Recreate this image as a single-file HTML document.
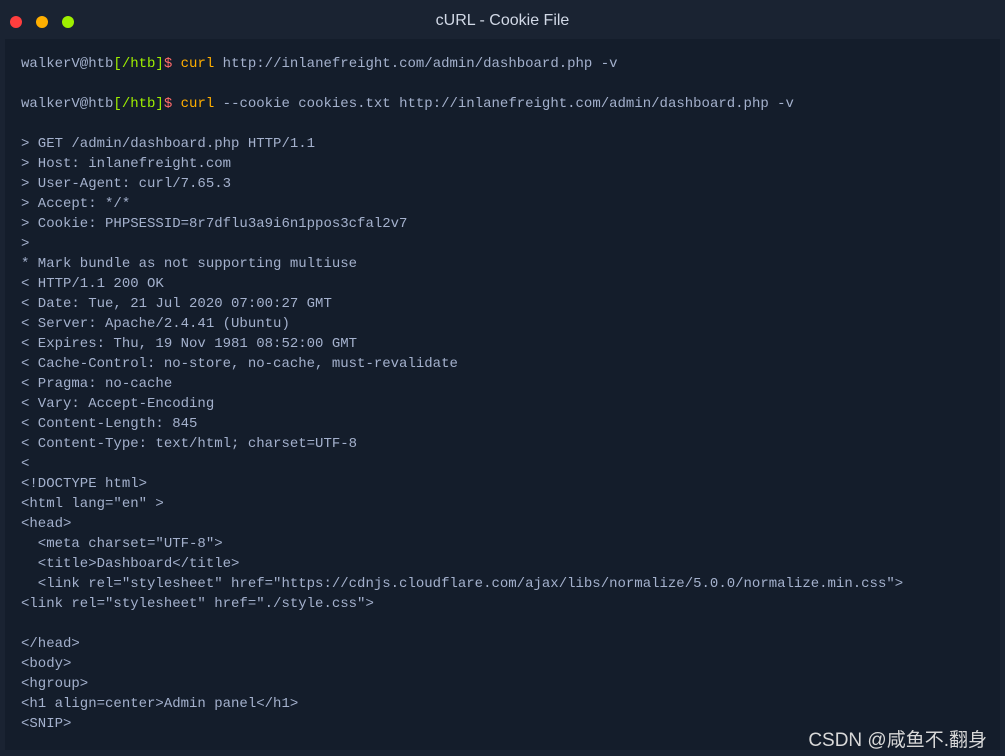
<!DOCTYPE html>
<html><head><meta charset="utf-8"><style>
html,body{margin:0;padding:0;width:1005px;height:756px;background:#1a2332;overflow:hidden}
.bar{position:absolute;left:0;top:0;width:1005px;height:39px;background:#1a2332}
.dot{position:absolute;top:16px;width:12px;height:12px;border-radius:50%}
.title{position:absolute;top:12px;left:0;width:1005px;text-align:center;color:#d1d8e6;font:16px "Liberation Sans",sans-serif}
.term{position:absolute;left:5px;top:39px;width:995px;height:711px;background:#141d2b}
pre{margin:0;position:absolute;left:16px;top:15px;font:14px/20px "Liberation Mono",monospace;color:#a4b1cd}
.g{color:#9fef00}.r{color:#ff6b6b}.y{color:#ffaf00}
.wm{position:absolute;right:18px;top:725px;color:#d8d8d8;font:19px "Liberation Sans","Noto Sans CJK SC",sans-serif}
</style></head><body>
<div class="bar">
<div class="dot" style="left:10px;background:#ff3e3e"></div>
<div class="dot" style="left:36px;background:#ffaf00"></div>
<div class="dot" style="left:62px;background:#9fef00"></div>
<div class="title">cURL - Cookie File</div>
</div>
<div class="term"><pre>walkerV@htb<span class="g">[/htb]</span><span class="r">$</span> <span class="y">curl</span> http://inlanefreight.com/admin/dashboard.php -v

walkerV@htb<span class="g">[/htb]</span><span class="r">$</span> <span class="y">curl</span> --cookie cookies.txt http://inlanefreight.com/admin/dashboard.php -v

&gt; GET /admin/dashboard.php HTTP/1.1
&gt; Host: inlanefreight.com
&gt; User-Agent: curl/7.65.3
&gt; Accept: */*
&gt; Cookie: PHPSESSID=8r7dflu3a9i6n1ppos3cfal2v7
&gt;
* Mark bundle as not supporting multiuse
&lt; HTTP/1.1 200 OK
&lt; Date: Tue, 21 Jul 2020 07:00:27 GMT
&lt; Server: Apache/2.4.41 (Ubuntu)
&lt; Expires: Thu, 19 Nov 1981 08:52:00 GMT
&lt; Cache-Control: no-store, no-cache, must-revalidate
&lt; Pragma: no-cache
&lt; Vary: Accept-Encoding
&lt; Content-Length: 845
&lt; Content-Type: text/html; charset=UTF-8
&lt;
&lt;!DOCTYPE html&gt;
&lt;html lang="en" &gt;
&lt;head&gt;
  &lt;meta charset="UTF-8"&gt;
  &lt;title&gt;Dashboard&lt;/title&gt;
  &lt;link rel="stylesheet" href="https://cdnjs.cloudflare.com/ajax/libs/normalize/5.0.0/normalize.min.css"&gt;
&lt;link rel="stylesheet" href="./style.css"&gt;

&lt;/head&gt;
&lt;body&gt;
&lt;hgroup&gt;
&lt;h1 align=center&gt;Admin panel&lt;/h1&gt;
&lt;SNIP&gt;</pre></div>
<div class="wm">CSDN @咸鱼不.翻身</div>
</body></html>
